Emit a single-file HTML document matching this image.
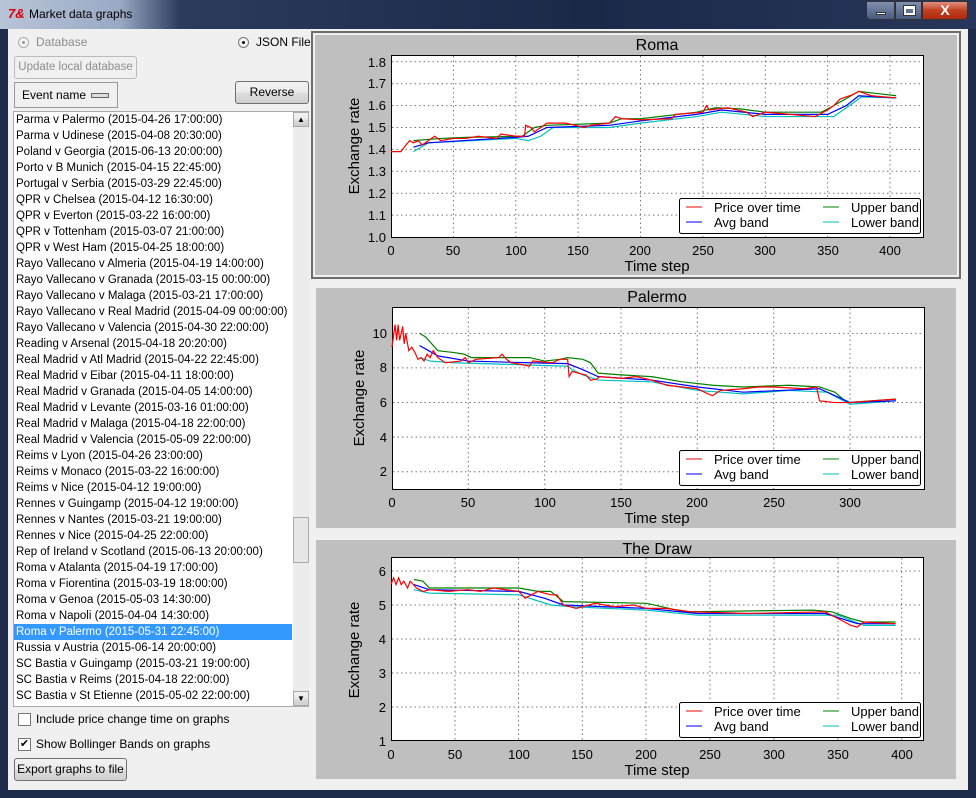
<!DOCTYPE html>
<html><head><meta charset="utf-8"><style>
*{margin:0;padding:0;box-sizing:border-box}
body{width:976px;height:798px;position:relative;overflow:hidden;background:#1f2b4a;font-family:"Liberation Sans",sans-serif;font-size:12px;color:#000}
.abs{position:absolute}
#title{left:0;top:0;width:976px;height:29px;background:linear-gradient(90deg,#b8c4d8 0,#9aa9c4 120px,#2c3a5c 180px,#1c2848 60%,#27365a 100%)}
#client{left:8px;top:29px;width:960px;height:761px;background:#f0f0f0}
.btn{position:absolute;border:1px solid #707070;border-radius:3px;background:linear-gradient(#f2f2f2,#ebebeb 50%,#dddddd 51%,#cfcfcf);text-align:center;line-height:20px}
.item{height:16px;line-height:16px;padding-left:2px;white-space:nowrap;font-size:11.5px}
.sel{background:#3399ff;color:#fff}
.panel{position:absolute;background:#bfbfbf}
</style></head><body>
<div id="title" class="abs">
<div class="abs" style="left:8px;top:6px;color:#d00;font-weight:bold;font-style:italic;font-size:13px">7&amp;</div>
<div class="abs" style="left:29px;top:7px;font-size:12px;color:#000">Market data graphs</div>
<div class="abs" style="left:866px;top:1px;width:29px;height:19px;border:1px solid #333;border-radius:0 0 0 4px;background:linear-gradient(#8090b0,#4a5a80)"><div class="abs" style="left:9px;top:10px;width:10px;height:3px;background:#fff;border:1px solid #333"></div></div>
<div class="abs" style="left:895px;top:1px;width:27px;height:19px;border:1px solid #333;background:linear-gradient(#8090b0,#4a5a80)"><div class="abs" style="left:8px;top:4px;width:11px;height:9px;border:2px solid #fff;border-top-width:3px;outline:1px solid #333"></div></div>
<div class="abs" style="left:922px;top:1px;width:46px;height:19px;border:1px solid #333;border-radius:0 0 4px 0;background:linear-gradient(#e09080,#c04020 50%,#b02810);color:#fff;font-weight:bold;font-size:14px;text-align:center;line-height:17px">X</div>
</div>
<div id="client" class="abs"></div>

<div class="abs" style="left:18px;top:37px;width:11px;height:11px;border-radius:50%;border:1px solid #aaa;background:#f4f4f4"><div class="abs" style="left:3px;top:3px;width:3px;height:3px;border-radius:50%;background:#999"></div></div>
<div class="abs" style="left:36px;top:35px;color:#8d8d8d">Database</div>
<div class="abs" style="left:238px;top:37px;width:11px;height:11px;border-radius:50%;border:1px solid #777;background:#f4f4f4"><div class="abs" style="left:3px;top:3px;width:3px;height:3px;border-radius:50%;background:#111"></div></div>
<div class="abs" style="left:256px;top:35px">JSON File</div>
<div class="btn" style="left:14px;top:56px;width:123px;height:23px;color:#8d8d8d;border-color:#bbb;background:#f0f0f0;font-size:11.5px">Update local database</div>
<div class="btn" style="left:14px;top:82px;width:104px;height:26px;border-radius:0;line-height:24px;text-align:left;padding-left:7px;background:#f0f0f0;border-color:#999">Event name<div class="abs" style="left:76px;top:10px;width:18px;height:5px;border:1px solid #666;background:#ddd"></div></div>
<div class="btn" style="left:235px;top:81px;width:74px;height:23px">Reverse</div>

<div class="abs" style="left:13px;top:111px;width:296px;height:596px;background:#fff;border:1px solid #aaa"></div>
<div class="abs" style="left:14px;top:112px;width:278px;overflow:hidden">
<div class="item">Parma v Palermo (2015-04-26 17:00:00)</div>
<div class="item">Parma v Udinese (2015-04-08 20:30:00)</div>
<div class="item">Poland v Georgia (2015-06-13 20:00:00)</div>
<div class="item">Porto v B Munich (2015-04-15 22:45:00)</div>
<div class="item">Portugal v Serbia (2015-03-29 22:45:00)</div>
<div class="item">QPR v Chelsea (2015-04-12 16:30:00)</div>
<div class="item">QPR v Everton (2015-03-22 16:00:00)</div>
<div class="item">QPR v Tottenham (2015-03-07 21:00:00)</div>
<div class="item">QPR v West Ham (2015-04-25 18:00:00)</div>
<div class="item">Rayo Vallecano v Almeria (2015-04-19 14:00:00)</div>
<div class="item">Rayo Vallecano v Granada (2015-03-15 00:00:00)</div>
<div class="item">Rayo Vallecano v Malaga (2015-03-21 17:00:00)</div>
<div class="item">Rayo Vallecano v Real Madrid (2015-04-09 00:00:00)</div>
<div class="item">Rayo Vallecano v Valencia (2015-04-30 22:00:00)</div>
<div class="item">Reading v Arsenal (2015-04-18 20:20:00)</div>
<div class="item">Real Madrid v Atl Madrid (2015-04-22 22:45:00)</div>
<div class="item">Real Madrid v Eibar (2015-04-11 18:00:00)</div>
<div class="item">Real Madrid v Granada (2015-04-05 14:00:00)</div>
<div class="item">Real Madrid v Levante (2015-03-16 01:00:00)</div>
<div class="item">Real Madrid v Malaga (2015-04-18 22:00:00)</div>
<div class="item">Real Madrid v Valencia (2015-05-09 22:00:00)</div>
<div class="item">Reims v Lyon (2015-04-26 23:00:00)</div>
<div class="item">Reims v Monaco (2015-03-22 16:00:00)</div>
<div class="item">Reims v Nice (2015-04-12 19:00:00)</div>
<div class="item">Rennes v Guingamp (2015-04-12 19:00:00)</div>
<div class="item">Rennes v Nantes (2015-03-21 19:00:00)</div>
<div class="item">Rennes v Nice (2015-04-25 22:00:00)</div>
<div class="item">Rep of Ireland v Scotland (2015-06-13 20:00:00)</div>
<div class="item">Roma v Atalanta (2015-04-19 17:00:00)</div>
<div class="item">Roma v Fiorentina (2015-03-19 18:00:00)</div>
<div class="item">Roma v Genoa (2015-05-03 14:30:00)</div>
<div class="item">Roma v Napoli (2015-04-04 14:30:00)</div>
<div class="item sel">Roma v Palermo (2015-05-31 22:45:00)</div>
<div class="item">Russia v Austria (2015-06-14 20:00:00)</div>
<div class="item">SC Bastia v Guingamp (2015-03-21 19:00:00)</div>
<div class="item">SC Bastia v Reims (2015-04-18 22:00:00)</div>
<div class="item">SC Bastia v St Etienne (2015-05-02 22:00:00)</div>
</div>
<div class="abs" style="left:293px;top:112px;width:16px;height:594px;background:#ececec"></div>
<div class="btn" style="left:293px;top:112px;width:16px;height:15px;border-radius:0;border-color:#aaa;line-height:13px;font-size:8px">▲</div>
<div class="btn" style="left:293px;top:691px;width:16px;height:15px;border-radius:0;border-color:#aaa;line-height:13px;font-size:8px">▼</div>
<div class="btn" style="left:293px;top:517px;width:16px;height:46px;border-radius:0;border-color:#aaa;background:#e6e6e6"></div>

<div class="abs" style="left:18px;top:713px;width:13px;height:13px;border:1px solid #777;background:#fff"></div>
<div class="abs" style="left:36px;top:712px">Include price change time on graphs</div>
<div class="abs" style="left:18px;top:738px;width:13px;height:13px;border:1px solid #777;background:#fff;font-size:11px;line-height:11px;text-align:center">✔</div>
<div class="abs" style="left:36px;top:737px">Show Bollinger Bands on graphs</div>
<div class="btn" style="left:14px;top:758px;width:113px;height:23px">Export graphs to file</div>

<div class="panel" style="left:311px;top:31px;width:650px;height:248px;border:2px solid #6c6c6c;box-shadow:inset 0 0 0 2px #f0f0f0"></div>
<div class="panel" style="left:316px;top:288px;width:640px;height:240px"></div>
<div class="panel" style="left:316px;top:540px;width:640px;height:239px"></div>

<svg class="abs" style="left:0;top:0" width="976" height="798" font-family="Liberation Sans, sans-serif" font-size="13">
<defs><style>
.ax{fill:#fff;stroke:#000;stroke-width:1}
.g{stroke:#777;stroke-width:1;stroke-dasharray:1.5,3}
.ln{fill:none;stroke-width:1.2;vector-effect:non-scaling-stroke}
.lg{fill:#fff;stroke:#000;stroke-width:1}
</style></defs>

<rect class="ax" x="391.5" y="55.5" width="532" height="182"/>
<g class="g">
<path d="M453.4 56V237M515.8 56V237M578.1 56V237M640.5 56V237M702.9 56V237M765.3 56V237M827.6 56V237M890 56V237"/>
<path d="M392 215.1H923M392 193.2H923M392 171.3H923M392 149.4H923M392 127.5H923M392 105.6H923M392 83.7H923M392 61.8H923"/>
</g>
<g transform="translate(391,237) scale(1.2475,-219) translate(0,-1)">
<polyline class="ln" stroke="#008000" points="18,1.44 40,1.45 60,1.455 105,1.46 115,1.5 125,1.51 175,1.52 185,1.54 200,1.54 245,1.57 260,1.59 280,1.585 300,1.57 345,1.57 355,1.6 375,1.665 390,1.655 405,1.645"/>
<polyline class="ln" stroke="#00bfbf" points="18,1.39 30,1.43 100,1.45 110,1.44 120,1.46 130,1.5 175,1.5 200,1.52 245,1.55 265,1.57 300,1.55 355,1.55 370,1.61 377,1.64 405,1.635"/>
<polyline class="ln" stroke="#0000ff" points="18,1.41 30,1.43 100,1.455 110,1.46 125,1.5 175,1.51 200,1.53 245,1.56 265,1.58 300,1.56 350,1.56 365,1.6 375,1.645 405,1.635"/>
<polyline class="ln" stroke="#ff0000" points="0,1.39 8,1.39 12,1.42 15,1.44 18,1.43 22,1.44 25,1.42 30,1.44 35,1.46 40,1.44 50,1.45 60,1.45 70,1.46 85,1.45 88,1.47 100,1.46 107,1.46 108,1.51 112,1.5 115,1.48 120,1.5 125,1.52 140,1.52 155,1.5 160,1.51 175,1.52 180,1.55 185,1.54 200,1.535 225,1.54 228,1.56 250,1.57 253,1.6 255,1.58 270,1.59 285,1.57 290,1.55 300,1.57 320,1.56 340,1.55 350,1.58 355,1.6 360,1.63 370,1.65 375,1.665 385,1.645 395,1.64 405,1.635"/>
</g>
<g text-anchor="end">
<text x="386" y="242">1.0</text><text x="386" y="220">1.1</text><text x="386" y="198">1.2</text><text x="386" y="176">1.3</text><text x="386" y="154">1.4</text><text x="386" y="132">1.5</text><text x="386" y="110">1.6</text><text x="386" y="88">1.7</text><text x="386" y="67">1.8</text>
</g>
<g text-anchor="middle">
<text x="391" y="255">0</text><text x="453" y="255">50</text><text x="516" y="255">100</text><text x="578" y="255">150</text><text x="640" y="255">200</text><text x="703" y="255">250</text><text x="765" y="255">300</text><text x="828" y="255">350</text><text x="890" y="255">400</text>
<text x="657" y="271" font-size="15">Time step</text>
<text x="657" y="50" font-size="16">Roma</text>
<text transform="translate(359,146) rotate(-90)" font-size="15">Exchange rate</text>
</g>
<rect class="lg" x="679.5" y="198.5" width="241" height="35" rx="2"/>

<rect class="ax" x="392.5" y="307.5" width="532" height="182"/>
<g class="g">
<path d="M468.3 308V489M544.7 308V489M621 308V489M697.3 308V489M773.7 308V489M850 308V489"/>
<path d="M393 471.7H924M393 437.1H924M393 402.5H924M393 367.9H924M393 333.4H924"/>
</g>
<g transform="translate(392,489) scale(1.527,-17.29) translate(0,-1)">
<polyline class="ln" stroke="#008000" points="18,10 22,9.8 30,9 40,8.9 47,8.8 52,8.6 90,8.6 100,8.4 110,8.5 115,8.6 125,8.5 130,8.3 135,7.7 150,7.6 170,7.5 190,7.2 210,7 230,6.9 260,7 280,6.9 290,6.6 298,6 330,6.2"/>
<polyline class="ln" stroke="#00bfbf" points="18,8.6 25,8.4 40,8.3 80,8.2 115,8.1 118,7.9 125,7.6 135,7.3 170,7.2 200,6.7 230,6.5 260,6.7 285,6.6 300,5.9 330,6.1"/>
<polyline class="ln" stroke="#0000ff" points="18,9.3 22,9.1 30,8.7 50,8.4 90,8.3 115,8.25 125,7.9 135,7.5 170,7.3 200,6.9 230,6.6 280,6.8 300,6 330,6.1"/>
<polyline class="ln" stroke="#ff0000" points="0,9.2 2,10.5 3,9.6 4,10.5 5,9.6 7,10.4 8,9.4 9,10 11,9 13,9.2 15,8.9 17,8.5 19,8.6 21,8.4 23,8.8 25,8.6 27,9 30,8.6 35,8.3 45,8.4 48,8.6 50,8.3 55,8.5 70,8.6 72,8.8 75,8.5 78,8.3 85,8.2 90,8.1 92,8.4 105,8.3 110,8.5 115,8.5 116,7.5 118,7.8 122,7.7 127,7.6 130,7.3 134,7.35 136,7.5 150,7.4 160,7.5 170,7.3 180,7 190,6.9 200,6.8 207,6.5 210,6.4 215,6.7 230,6.8 240,6.9 250,6.9 270,6.8 278,6.9 280,6.1 290,6 300,6 330,6.2"/>
</g>
<g text-anchor="end">
<text x="387" y="476">2</text><text x="387" y="442">4</text><text x="387" y="407">6</text><text x="387" y="372">8</text><text x="387" y="338">10</text>
</g>
<g text-anchor="middle">
<text x="392" y="507">0</text><text x="468" y="507">50</text><text x="545" y="507">100</text><text x="621" y="507">150</text><text x="697" y="507">200</text><text x="774" y="507">250</text><text x="850" y="507">300</text>
<text x="657" y="523" font-size="15">Time step</text>
<text x="657" y="302" font-size="16">Palermo</text>
<text transform="translate(364,398) rotate(-90)" font-size="15">Exchange rate</text>
</g>
<rect class="lg" x="679.5" y="450.5" width="241" height="35" rx="2"/>

<rect class="ax" x="391.5" y="557.5" width="532" height="183"/>
<g class="g">
<path d="M455 558V741M518.5 558V741M582.3 558V741M646 558V741M710 558V741M774 558V741M838 558V741M901.7 558V741"/>
<path d="M392 707H923M392 673H923M392 639H923M392 605H923M392 571H923"/>
</g>
<g transform="translate(391,741) scale(1.2775,-34) translate(0,-1)">
<polyline class="ln" stroke="#008000" points="18,5.75 25,5.7 30,5.5 50,5.5 100,5.5 115,5.4 125,5.4 135,5.1 200,5.05 230,4.8 330,4.85 345,4.8 360,4.6 370,4.5 395,4.5"/>
<polyline class="ln" stroke="#00bfbf" points="18,5.45 30,5.35 100,5.3 125,5 140,4.95 200,4.85 240,4.7 350,4.7 370,4.4 395,4.4"/>
<polyline class="ln" stroke="#0000ff" points="18,5.6 30,5.45 100,5.4 120,5.2 135,5 200,4.9 240,4.75 340,4.75 365,4.45 395,4.45"/>
<polyline class="ln" stroke="#ff0000" points="0,5.6 2,5.8 4,5.6 6,5.8 8,5.6 10,5.7 13,5.5 15,5.7 20,5.5 25,5.4 30,5.45 45,5.4 60,5.45 70,5.4 80,5.5 100,5.4 105,5.2 110,5.3 115,5.4 125,5.3 130,5.3 135,5 145,4.9 160,5.05 175,4.95 190,5 200,4.9 215,4.9 235,4.8 280,4.75 340,4.8 350,4.6 355,4.5 360,4.4 365,4.35 370,4.5 395,4.45"/>
</g>
<g text-anchor="end">
<text x="386" y="746">1</text><text x="386" y="712">2</text><text x="386" y="678">3</text><text x="386" y="644">4</text><text x="386" y="610">5</text><text x="386" y="576">6</text>
</g>
<g text-anchor="middle">
<text x="391" y="759">0</text><text x="455" y="759">50</text><text x="519" y="759">100</text><text x="582" y="759">150</text><text x="646" y="759">200</text><text x="710" y="759">250</text><text x="774" y="759">300</text><text x="838" y="759">350</text><text x="902" y="759">400</text>
<text x="657" y="775" font-size="15">Time step</text>
<text x="657" y="554" font-size="16">The Draw</text>
<text transform="translate(359,650) rotate(-90)" font-size="15">Exchange rate</text>
</g>
<rect class="lg" x="679.5" y="702.5" width="241" height="35" rx="2"/>

<g id="leg">
<path d="M686 207H702" stroke="#f00"/><path d="M686 222H702" stroke="#00f"/><path d="M823 207H839" stroke="#008000"/><path d="M823 222H839" stroke="#0bb"/>
<text x="714" y="212">Price over time</text><text x="714" y="227">Avg band</text><text x="851" y="212">Upper band</text><text x="851" y="227">Lower band</text>
</g>
<use href="#leg" y="252"/>
<use href="#leg" y="504"/>
</svg>
</body></html>
